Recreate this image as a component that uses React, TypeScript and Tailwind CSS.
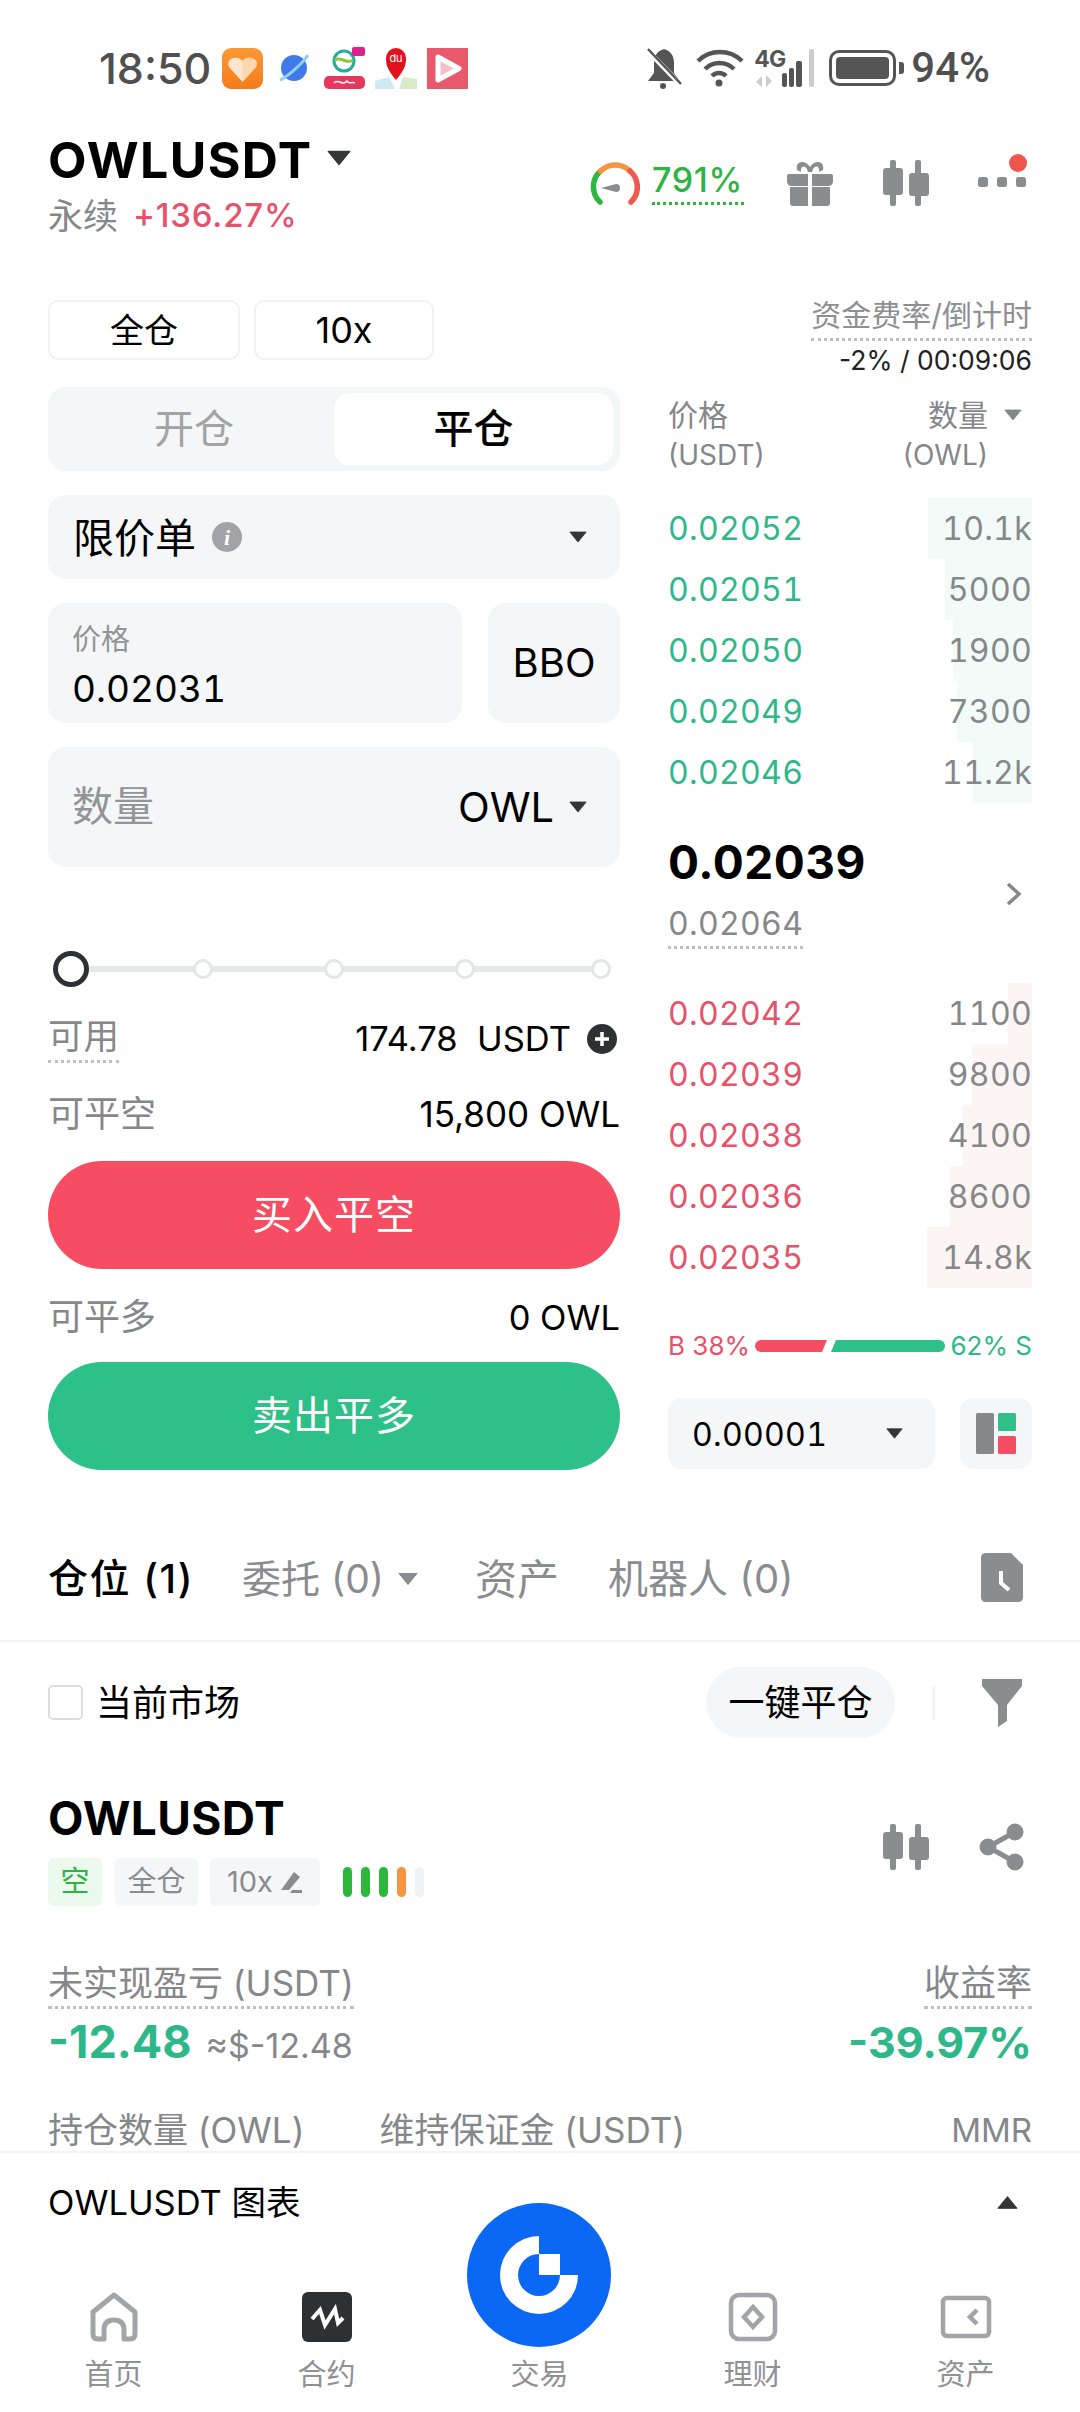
import React from "react";

const Caret = ({ w = 20, h = 13, c = "#333538", up = false }: { w?: number; h?: number; c?: string; up?: boolean }) => (
  <svg width={w} height={h} viewBox="0 0 20 13" className="shrink-0">
    <path d={up ? "M10 1 L19 12 H1 Z" : "M1 1 H19 L10 12 Z"} fill={c} stroke={c} strokeLinejoin="round" />
  </svg>
);

const Candles = () => (
  <svg width="46" height="46" viewBox="0 0 46 46" fill="#8a8c90">
    <rect x="7" y="0" width="6" height="46" rx="2" />
    <rect x="0" y="8" width="20" height="27" rx="3" />
    <rect x="32" y="0" width="6" height="46" rx="2" />
    <rect x="26" y="13" width="20" height="23" rx="3" />
  </svg>
);

const Gauge = () => (
  <svg width="50" height="44" viewBox="0 0 50 44" fill="none" strokeWidth="5.5" strokeLinecap="round">
    <path d="M10 40 A21 21 0 0 1 10.5 9" stroke="#2db83d" />
    <path d="M10.5 9 A21 21 0 0 1 40 9" stroke="#f5953f" />
    <path d="M40 9 A21 21 0 0 1 41 40" stroke="#ee5a50" />
    <path d="M11 26 L26 22 A3.6 3.6 0 0 1 26 30 Z" fill="#8a8c90" stroke="none" />
  </svg>
);

const Gift = () => (
  <svg width="46" height="46" viewBox="0 0 46 46" fill="#8a8c90">
    <path d="M10 10 C8 1 18 -1 23 7 C28 -1 38 1 36 10 L32 12 C33 7 29 4 26 9 L25 12 H21 L20 9 C17 4 13 7 14 12 Z" />
    <path d="M2 14 H21 V26 H5 Q0 26 0 21 V16 Q0 14 2 14 Z M25 14 H44 Q46 14 46 16 V21 Q46 26 41 26 H25 Z" />
    <path d="M3 27 H21 V46 H6 Q3 46 3 43 Z M25 27 H43 V43 Q43 46 40 46 H25 Z" />
  </svg>
);

const StatusLeft = () => (
  <div className="flex items-center h-[42px]">
    <svg width="41" height="41" viewBox="0 0 41 41" className="ml-[11px]">
      <defs>
        <linearGradient id="o" x1="0" y1="0" x2="0" y2="1">
          <stop offset="0" stopColor="#fb9a36" />
          <stop offset="1" stopColor="#f57b1a" />
        </linearGradient>
      </defs>
      <rect width="41" height="41" rx="9" fill="url(#o)" />
      <path d="M20.5 34 L7 19 C3 11 15 6 20.5 13 C26 6 38 11 34 19 Z" fill="#fde6cd" />
      <path d="M20.5 34 L20.5 13 C26 6 38 11 34 19 Z" fill="#fbd6ae" />
    </svg>
    <svg width="30" height="30" viewBox="0 0 30 30" className="ml-[16px]">
      <circle cx="15" cy="15" r="13" fill="#3f7ae8" />
      <path d="M1 27 C8 24 22 12 29 2" stroke="#8fd0fb" strokeWidth="3" fill="none" />
    </svg>
    <svg width="42" height="42" viewBox="0 0 42 42" className="ml-[15px]">
      <circle cx="20" cy="14" r="10" fill="none" stroke="#2aa7a0" strokeWidth="3" />
      <path d="M11 13 C16 9 24 18 29 13" stroke="#8cc63f" strokeWidth="3" fill="none" />
      <rect x="28" y="0" width="13" height="9" rx="2" fill="#e0218a" />
      <rect x="0" y="29" width="41" height="13" rx="5" fill="#e8365d" />
      <path d="M10 36 C15 31 18 40 23 34 C25 38 28 34 31 36" stroke="#fff" strokeWidth="1.5" fill="none" />
    </svg>
    <svg width="42" height="42" viewBox="0 0 42 42" className="ml-[9px]">
      <path d="M0 34 L14 30 L20 42 H0 Z" fill="#cdeaf2" />
      <path d="M28 30 L42 32 V42 H24 Z" fill="#d5ecc7" />
      <path d="M21 33 C12 22 11 18 11 11 A10 10 0 0 1 31 11 C31 18 30 22 21 33 Z" fill="#e3101e" />
      <text x="21" y="15" fontSize="11" fill="#fff" textAnchor="middle" fontFamily="Inter">du</text>
    </svg>
    <svg width="41" height="41" viewBox="0 0 41 41" className="ml-[10px]">
      <rect width="41" height="41" fill="#e8596c" />
      <path d="M11 9 L32 20.5 L11 32 Z" fill="#f4c0c6" stroke="#fff" strokeWidth="5" strokeLinejoin="round" />
    </svg>
  </div>
);

const StatusRight = () => (
  <div className="flex items-center h-[42px] absolute right-[90px] top-[47px]">
    <svg width="36" height="41" viewBox="0 0 36 41" fill="#555">
      <path d="M18 1 C11 3 8 8 8 15 V25 L2 33 H34 L28 25 V15 C28 8 25 3 18 1 Z" />
      <circle cx="17" cy="38" r="3" />
      <path d="M1 2 L34 36" stroke="#fff" strokeWidth="5" />
      <path d="M2 1 L35 36" stroke="#555" strokeWidth="2.5" />
    </svg>
    <svg width="48" height="38" viewBox="0 0 48 38" fill="none" stroke="#555" strokeWidth="4.5" className="ml-[14px]">
      <path d="M2 12 C14 0 34 0 46 12" />
      <path d="M9 20 C17 12 30 12 38 20" />
      <path d="M16 27 C20 23 26 23 30 27" />
      <circle cx="23" cy="34" r="3.5" fill="#555" stroke="none" />
    </svg>
    <div className="relative w-[62px] h-[38px] ml-[10px]">
      <span className="absolute left-0 top-[-3px] text-[23px] leading-[26px] font-bold text-[#555] tracking-[-1px]">4G</span>
      <svg width="62" height="38" viewBox="0 0 62 38" className="absolute inset-0">
        <rect x="28" y="24" width="5" height="14" rx="2" fill="#555" />
        <rect x="35" y="19" width="5" height="19" rx="2" fill="#555" />
        <rect x="42" y="12" width="6" height="26" rx="2" fill="#555" />
        <rect x="55" y="0" width="5" height="38" rx="2" fill="#ccc" />
        <path d="M2 33 L8 27 V38 Z M12 26 L18 32 L12 38 Z" fill="#ccc" />
      </svg>
    </div>
    <div className="ml-[13px] w-[67px] h-[36px] rounded-[10px] border-[3px] border-[#555] p-[4px]">
      <div className="w-full h-full rounded-[4px] bg-[#555]" />
    </div>
    <div className="w-[5px] h-[12px] rounded-r-[3px] bg-[#555] ml-[3px]" />
    <span className="ml-[7px] text-[42px] leading-[42px] font-medium text-[#505050]" style={{ fontFamily: "Roboto, sans-serif" }}>94%</span>
  </div>
);

const asks = [
  ["0.02052", "10.1k", 104],
  ["0.02051", "5000", 87],
  ["0.02050", "1900", 79],
  ["0.02049", "7300", 75],
  ["0.02046", "11.2k", 59],
] as const;
const bids = [
  ["0.02042", "1100", 24],
  ["0.02039", "9800", 60],
  ["0.02038", "4100", 69],
  ["0.02036", "8600", 82],
  ["0.02035", "14.8k", 105],
] as const;

const Row = ({ p, q, w, price, bar }: { p: string; q: string; w: number; price: string; bar: string }) => (
  <div className="relative h-[61px] flex items-center justify-between text-[32px] tracking-[0.3px] tabular-nums pt-[1px]">
    <div className={`absolute right-0 inset-y-0 ${bar}`} style={{ width: w }} />
    <span className={`relative ${price}`}>{p}</span>
    <span className="relative text-[#85878a]">{q}</span>
  </div>
);

const Tag = ({ children, cls }: { children: React.ReactNode; cls: string }) => (
  <div className={`h-[48px] rounded-[6px] flex items-center justify-center text-[29px] ${cls}`}>{children}</div>
);

const NavItem = ({ label, icon }: { label: string; icon: React.ReactNode }) => (
  <div className="flex flex-col items-center w-[213px]">
    <div className="h-[56px] flex items-center justify-center">{icon}</div>
    <span className="mt-[12px] text-[29px] leading-[36px] text-[#8f9194]">{label}</span>
  </div>
);

const sliderGaps = ["ml-[104px]", "ml-[111px]", "ml-[111px]", "ml-[116px]"];

export default function App() {
  return (
    <div
      className="relative w-[1080px] h-[2412px] overflow-hidden bg-white flex flex-col text-black"
      style={{ fontFamily: 'Inter, "Noto Sans CJK SC", sans-serif' }}
    >
      {/* status bar */}
      <div className="h-[94px] shrink-0 pt-[47px] pl-[99px] flex items-start">
        <span className="text-[43px] leading-[42px] font-medium text-[#505050]">18:50</span>
        <StatusLeft />
        <StatusRight />
      </div>

      {/* header */}
      <div className="h-[136px] shrink-0 px-[48px] flex justify-between">
        <div className="flex flex-col">
          <div className="flex items-center h-[52px] mt-[40px]">
            <span className="text-[50px] leading-[52px] font-bold tracking-[1.4px]">OWLUSDT</span>
            <span className="ml-[14px] mb-[4px]"><Caret w={24} h={16} /></span>
          </div>
          <div className="flex items-center mt-[8px] h-[44px]">
            <span className="text-[35px] text-[#85878a]">永续</span>
            <span className="ml-[15px] text-[33px] font-medium text-[#e8516a] tracking-[0.8px]">+136.27%</span>
          </div>
        </div>
        <div className="relative w-[442px] h-[136px] mr-[2px]">
          <div className="absolute left-[2px] top-[68px]"><Gauge /></div>
          <div className="absolute left-[64px] top-[68px] w-[92px] h-[43px] border-b-[3px] border-dotted border-[#2db83d] text-[34px] leading-[36px] font-medium text-[#2fb344] tracking-[0.6px] whitespace-nowrap">791%</div>
          <div className="absolute left-[199px] top-[66px]"><Gift /></div>
          <div className="absolute left-[295px] top-[66px]"><Candles /></div>
          <svg width="54" height="36" viewBox="0 0 54 36" className="absolute left-[388px] top-[60px]">
            <rect x="2" y="23" width="10" height="10" rx="2.5" fill="#8a8c90" />
            <rect x="21" y="23" width="10" height="10" rx="2.5" fill="#8a8c90" />
            <rect x="40" y="23" width="10" height="10" rx="2.5" fill="#8a8c90" />
            <circle cx="42" cy="9" r="9" fill="#f0564a" />
          </svg>
        </div>
      </div>

      {/* margin row */}
      <div className="h-[157px] shrink-0 px-[48px] flex justify-between">
        <div className="flex gap-[14px] mt-[70px]">
          <div className="w-[192px] h-[60px] rounded-[10px] border-[2px] border-[#f0f1f2] flex items-center justify-center text-[34px]">全仓</div>
          <div className="w-[180px] h-[60px] rounded-[10px] border-[2px] border-[#f0f1f2] flex items-center justify-center text-[36px]">10x</div>
        </div>
        <div className="flex flex-col items-end mt-[64px]">
          <span className="text-[30px] leading-[42px] pb-[2px] text-[#8d8f92] border-b-[3px] border-dotted border-[#bdbfc2]">资金费率/倒计时</span>
          <span className="text-[26.5px] leading-[32px] mt-[3px] text-[#222]">-2% / 00:09:06</span>
        </div>
      </div>

      {/* trade columns */}
      <div className="h-[1086px] shrink-0 px-[48px] flex justify-between">
        <div className="w-[572px] flex flex-col">
          <div className="h-[84px] rounded-[18px] bg-[#f4f6f7] p-[6px] pr-[7px] flex">
            <div className="w-[280px] flex items-center justify-center text-[40px] text-[#a1a3a6]">开仓</div>
            <div className="flex-1 rounded-[16px] bg-white flex items-center justify-center text-[40px] font-medium">平仓</div>
          </div>
          <div className="mt-[24px] h-[84px] rounded-[18px] bg-[#f4f6f7] pl-[25px] pr-[33px] flex items-center">
            <span className="text-[41px] pt-[3px]">限价单</span>
            <span className="ml-[16px] w-[30px] h-[30px] rounded-full bg-[#a1a3a6] text-white text-[22px] italic font-bold flex items-center justify-center" style={{ fontFamily: '"Liberation Serif", serif' }}>i</span>
            <span className="ml-auto"><Caret w={18} h={12} /></span>
          </div>
          <div className="mt-[24px] h-[120px] flex justify-between">
            <div className="w-[414px] rounded-[18px] bg-[#f4f6f7] pl-[24px] flex flex-col">
              <span className="mt-[18px] text-[29px] leading-[38px] text-[#929497]">价格</span>
              <span className="mt-[8px] text-[37px] leading-[44px] tabular-nums">0.02031</span>
            </div>
            <div className="w-[132px] rounded-[18px] bg-[#f4f6f7] flex items-center justify-center text-[40px]">BBO</div>
          </div>
          <div className="mt-[24px] h-[120px] rounded-[18px] bg-[#f4f6f7] pl-[24px] pr-[33px] flex items-center">
            <span className="text-[41px] text-[#929497]">数量</span>
            <span className="ml-auto text-[41.5px]">OWL</span>
            <span className="ml-[15px]"><Caret w={18} h={12} /></span>
          </div>
          <div className="relative mt-[82px] h-[40px] flex items-center pl-[5px]">
            <div className="absolute left-[24px] right-[10px] top-[17px] h-[6px] bg-[#e6e7e8]" />
            <div className="relative w-[36px] h-[36px] rounded-full border-[5px] border-[#2e3033] bg-white" />
            {sliderGaps.map((g, i) => (
              <div key={i} className={`relative w-[20px] h-[20px] rounded-full border-[3px] border-[#e4e5e6] bg-white ${g}`} />
            ))}
          </div>
          <div className="mt-[25px] h-[48px] flex items-center justify-between">
            <span className="text-[35.5px] leading-[46px] text-[#85878a] border-b-[3px] border-dotted border-[#bdbfc2]">可用</span>
            <div className="flex items-center mr-[3px] pt-[2px]">
              <span className="text-[34.5px] whitespace-pre">174.78  USDT</span>
              <span className="ml-[16px] w-[30px] h-[30px] rounded-full bg-[#2e3033] flex items-center justify-center">
                <svg width="18" height="18" viewBox="0 0 18 18"><path d="M9 2 V16 M2 9 H16" stroke="#fff" strokeWidth="3.5" /></svg>
              </span>
            </div>
          </div>
          <div className="mt-[28px] h-[48px] flex items-center justify-between">
            <span className="text-[36px] text-[#85878a]">可平空</span>
            <span className="text-[35px] pt-[1px]">15,800 OWL</span>
          </div>
          <div className="mt-[23px] h-[108px] rounded-full bg-[#f74d62] flex items-center justify-center text-[40px] text-white tracking-[1px]">买入平空</div>
          <div className="mt-[24px] h-[48px] flex items-center justify-between">
            <span className="text-[36px] text-[#85878a]">可平多</span>
            <span className="text-[34.5px] pt-[1px]">0 OWL</span>
          </div>
          <div className="mt-[21px] h-[108px] rounded-full bg-[#2dc088] flex items-center justify-center text-[40px] text-white tracking-[1px]">卖出平多</div>
        </div>

        <div className="w-[364px] flex flex-col">
          <div className="relative h-[111px] shrink-0 flex justify-between text-[#85878a] text-[30px] leading-[40px] pt-[8px]">
            <div className="flex flex-col">
              <span>价格</span>
              <span className="text-[28px]">(USDT)</span>
            </div>
            <div className="flex flex-col items-end pr-[44px]">
              <span>数量</span>
              <span className="text-[28px]">(OWL)</span>
            </div>
            <span className="absolute right-[10px] top-[22px]"><Caret w={18} h={12} c="#85878a" /></span>
          </div>
          {asks.map(([p, q, w]) => (
            <Row key={p} p={p} q={q} w={w} price="text-[#2eb88a]" bar="bg-[#f2fbf8]" />
          ))}
          <div className="h-[180px] shrink-0 flex justify-between items-center">
            <div className="flex flex-col items-start">
              <span className="text-[46px] leading-[56px] font-bold tracking-[0.5px] mt-[-3px]">0.02039</span>
              <span className="mt-[15px] text-[32px] leading-[38px] tracking-[0.3px] tabular-nums text-[#85878a] border-b-[3px] border-dotted border-[#bdbfc2] pb-[3px]">0.02064</span>
            </div>
            <svg width="18" height="26" viewBox="0 0 18 26" className="mr-[9px] mt-[2px]" fill="none" stroke="#85878a" strokeWidth="3.5">
              <path d="M3 3 L14 13 L3 23" />
            </svg>
          </div>
          {bids.map(([p, q, w]) => (
            <Row key={p} p={p} q={q} w={w} price="text-[#e8516a]" bar="bg-[#fdf5f3]" />
          ))}
          <div className="h-[110px] shrink-0 flex items-center justify-between text-[26px] pt-[5px]">
            <span className="text-[#e8516a] whitespace-nowrap">B 38%</span>
            <svg width="190" height="12" viewBox="0 0 190 12" className="shrink-0">
              <path d="M6 0 H72 L67 12 H6 A6 6 0 0 1 6 0 Z" fill="#f74d62" />
              <path d="M81 0 H184 A6 6 0 0 1 184 12 H76 Z" fill="#2dc088" />
            </svg>
            <span className="text-[#2eb88a] whitespace-nowrap">62% S</span>
          </div>
          <div className="h-[71px] shrink-0 flex justify-between">
            <div className="w-[267px] rounded-[14px] bg-[#f4f6f7] pl-[24px] pr-[32px] flex items-center justify-between">
              <span className="text-[32px] tracking-[0.3px] tabular-nums pt-[3px]">0.00001</span>
              <Caret w={17} h={11} />
            </div>
            <div className="w-[72px] rounded-[14px] bg-[#f4f6f7] flex items-center justify-center">
              <svg width="40" height="41" viewBox="0 0 40 41">
                <rect x="0" y="0" width="18" height="41" rx="1.5" fill="#85878a" />
                <rect x="22" y="0" width="18" height="18" rx="1.5" fill="#2dc088" />
                <rect x="22" y="23" width="18" height="18" rx="1.5" fill="#f74d62" />
              </svg>
            </div>
          </div>
        </div>
      </div>

      {/* tabs: ends at y=1642 */}
      <div className="h-[169px] shrink-0 pt-[45px] border-b-[2px] border-[#f3f4f5] px-[48px] flex items-center justify-between">
        <div className="flex items-center text-[40px] text-[#8a8c90]">
          <span className="text-black font-medium tracking-[1.5px]">仓位 (1)</span>
          <span className="ml-[48px] text-[39px]">委托 (0)</span>
          <span className="ml-[14px]"><Caret w={20} h={14} c="#8a8c90" /></span>
          <span className="ml-[57px] text-[42px]">资产</span>
          <span className="ml-[49px]">机器人 (0)</span>
        </div>
        <svg width="42" height="49" viewBox="0 0 42 49" className="mr-[9px] mt-[-3px]">
          <path d="M5 0 H30 L42 12 V44 Q42 49 37 49 H5 Q0 49 0 44 V5 Q0 0 5 0 Z" fill="#8a8c90" />
          <path d="M20 18 V30 L28 37" fill="none" stroke="#fff" strokeWidth="4" />
        </svg>
      </div>

      {/* positions, cut off by the chart bar */}
      <div className="flex-1 min-h-0 overflow-hidden px-[48px] flex flex-col">
        <div className="h-[71px] shrink-0 mt-[25px] flex items-center">
          <div className="w-[35px] h-[35px] rounded-[5px] border-[2px] border-[#dcdddf]" />
          <span className="ml-[13px] text-[36px]">当前市场</span>
          <div className="ml-auto w-[189px] h-[71px] rounded-full bg-[#f4f6f7] flex items-center justify-center text-[36px]">一键平仓</div>
          <div className="ml-[38px] w-[2px] h-[34px] bg-[#f1f2f3]" />
          <svg width="42" height="48" viewBox="0 0 42 48" className="ml-[46px] mr-[9px]">
            <path d="M1 0 H41 V7 L26 26 V42 L17 48 V26 L1 7 Z" fill="#8a8c90" />
          </svg>
        </div>
        <div className="mt-[55px] h-[50px] shrink-0 flex items-center justify-between">
          <span className="text-[46px] leading-[50px] font-bold tracking-[0.4px]">OWLUSDT</span>
        </div>
        <div className="h-[48px] shrink-0 mt-[15px] flex items-center relative">
          <Tag cls="w-[54px] bg-[#ecf9ee] text-[#2fb344]">空</Tag>
          <Tag cls="w-[83px] ml-[13px] bg-[#f4f6f7] text-[#8a8c90]">全仓</Tag>
          <Tag cls="w-[110px] ml-[12px] bg-[#f4f6f7] text-[#8a8c90] gap-[6px]">
            <span className="text-[29px]">10x</span>
            <svg width="24" height="24" viewBox="0 0 24 24" fill="#8a8c90">
              <path d="M15 2 L21 7 L10 20 L2 20 Z M13 20 H23 V23 H11 Z" />
            </svg>
          </Tag>
          <div className="ml-[23px] flex items-center gap-[9px]">
            {["#2db83d", "#2db83d", "#2db83d", "#f5953f", "#f1f2f3"].map((c, i) => (
              <div key={i} className="w-[9px] h-[30px] rounded-full" style={{ background: c }} />
            ))}
          </div>
          <div className="absolute right-[7px] top-[-35px] flex items-center gap-[50px]">
            <Candles />
            <svg width="46" height="48" viewBox="0 0 46 48" fill="#8a8c90" stroke="#8a8c90">
              <circle cx="36" cy="9" r="8" />
              <circle cx="9" cy="24" r="8" />
              <circle cx="36" cy="39" r="8" />
              <path d="M36 9 L9 24 L36 39" fill="none" strokeWidth="5" />
            </svg>
          </div>
        </div>
        <div className="mt-[56px] flex justify-between shrink-0">
          <span className="text-[35px] leading-[42px] pb-[2px] text-[#85878a] border-b-[3px] border-dotted border-[#bdbfc2]">未实现盈亏 (USDT)</span>
          <span className="text-[36px] leading-[42px] pb-[2px] text-[#85878a] border-b-[3px] border-dotted border-[#bdbfc2]">收益率</span>
        </div>
        <div className="mt-[7px] flex justify-between items-baseline shrink-0">
          <div className="flex items-baseline">
            <span className="text-[45px] leading-[52px] font-bold text-[#2eb88a]">-12.48</span>
            <span className="ml-[14px] text-[34px] text-[#85878a]">≈$-12.48</span>
          </div>
          <span className="text-[43px] leading-[52px] font-bold text-[#2eb88a]">-39.97%</span>
        </div>
        <div className="mt-[38px] flex items-center text-[35px] leading-[42px] text-[#85878a] shrink-0">
          <span>持仓数量 (OWL)</span>
          <span className="ml-[75px]">维持保证金 (USDT)</span>
          <span className="ml-auto text-[33px]">MMR</span>
        </div>
      </div>

      {/* bottom panel */}
      <div className="h-[261px] shrink-0 bg-white border-t-[2px] border-[#f2f3f4] flex flex-col">
        <div className="h-[94px] shrink-0 px-[48px] pr-[62px] pt-[5px] flex items-center justify-between">
          <span className="text-[34.5px]">OWLUSDT 图表</span>
          <Caret w={21} h={15} up />
        </div>
        <div className="flex px-[7px] mt-[42px]">
          <NavItem
            label="首页"
            icon={
              <svg width="48" height="50" viewBox="0 0 48 50" fill="none" stroke="#a2a4a7" strokeWidth="5" strokeLinejoin="round">
                <path d="M24 3 L45 20 V42 Q45 47 40 47 H34 L34 38 Q34 28 24 28 Q14 28 14 38 L14 47 H8 Q3 47 3 42 V20 Z" />
              </svg>
            }
          />
          <NavItem
            label="合约"
            icon={
              <svg width="50" height="50" viewBox="0 0 50 50">
                <rect width="50" height="50" rx="6" fill="#2e3033" />
                <path d="M10 27 L18 18 L23 33 L33 17 L36 31 L41 26" stroke="#fff" strokeWidth="4" fill="none" />
              </svg>
            }
          />
          <NavItem label="交易" icon={<div className="w-[50px] h-[50px]" />} />
          <NavItem
            label="理财"
            icon={
              <svg width="50" height="50" viewBox="0 0 50 50" fill="none" stroke="#a2a4a7" strokeWidth="4.5">
                <rect x="3" y="3" width="44" height="44" rx="8" />
                <path d="M25 15 L34 25 L25 35 L16 25 Z" />
              </svg>
            }
          />
          <NavItem
            label="资产"
            icon={
              <svg width="52" height="44" viewBox="0 0 52 44" fill="none" stroke="#a2a4a7" strokeWidth="4.5">
                <rect x="3" y="3" width="46" height="38" rx="4" />
                <path d="M37 15 L30 22 L37 29" />
              </svg>
            }
          />
        </div>
      </div>

      {/* floating trade button */}
      <div className="absolute left-[467px] top-[2203px] w-[144px] h-[144px] rounded-full bg-[#0a68f5] flex items-center justify-center">
        <svg width="80" height="80" viewBox="0 0 80 80">
          <path d="M40 1 A39 39 0 1 0 79 40 H61 V19 H40 Z" fill="#fff" />
          <path d="M40 40 V19 A21 21 0 1 0 61 40 Z" fill="#0a68f5" />
        </svg>
      </div>
    </div>
  );
}
